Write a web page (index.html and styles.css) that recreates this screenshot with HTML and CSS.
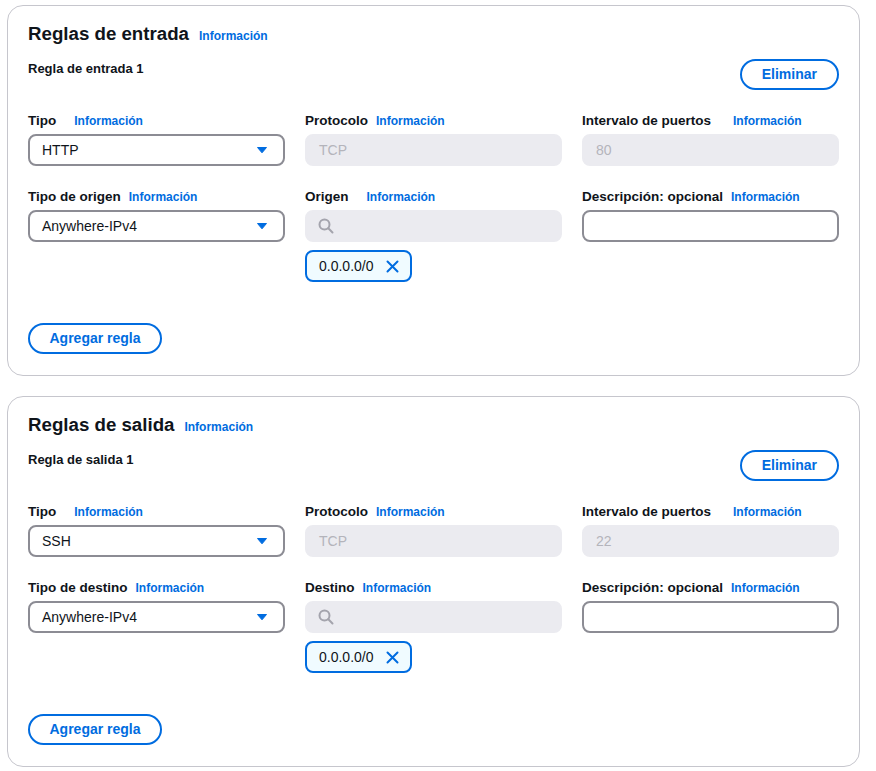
FILE: index.html
```html
<!DOCTYPE html>
<html lang="es">
<head>
<meta charset="utf-8">
<title>Reglas</title>
<link rel="stylesheet" href="styles.css">
</head>
<body>
<div class="page">
  <section class="card">
    <h2 class="card-title"><span class="title-text">Reglas de entrada</span><a class="info">Información</a></h2>
    <div class="rule-head">
      <span class="rule-name">Regla de entrada 1</span>
      <button class="btn">Eliminar</button>
    </div>
    <div class="grid">
      <div class="field">
        <div class="label"><span>Tipo</span><a class="info wide">Información</a></div>
        <div class="control select"><span>HTTP</span><svg class="caret" width="10" height="6" viewBox="0 0 10 6"><path d="M0.5 0.5h9L5 5.8z" fill="#006ce0" stroke="#006ce0" stroke-linejoin="round"/></svg></div>
      </div>
      <div class="field">
        <div class="label"><span>Protocolo</span><a class="info">Información</a></div>
        <div class="control disabled">TCP</div>
      </div>
      <div class="field">
        <div class="label"><span>Intervalo de puertos</span><a class="info xwide">Información</a></div>
        <div class="control disabled">80</div>
      </div>
      <div class="field">
        <div class="label"><span>Tipo de origen</span><a class="info">Información</a></div>
        <div class="control select"><span>Anywhere-IPv4</span><svg class="caret" width="10" height="6" viewBox="0 0 10 6"><path d="M0.5 0.5h9L5 5.8z" fill="#006ce0" stroke="#006ce0" stroke-linejoin="round"/></svg></div>
      </div>
      <div class="field">
        <div class="label"><span>Origen</span><a class="info wide">Información</a></div>
        <div class="control disabled search"><svg width="16" height="16" viewBox="0 0 16 16"><circle cx="6.5" cy="6.5" r="5" fill="none" stroke="#a4a4ad" stroke-width="2"/><path d="M10.3 10.3l4.2 4.2" stroke="#a4a4ad" stroke-width="2" stroke-linecap="round"/></svg></div>
        <div class="token"><span>0.0.0.0/0</span><svg width="13" height="13" viewBox="0 0 13 13"><path d="M1.5 1.5l10 10M11.5 1.5l-10 10" stroke="#006ce0" stroke-width="2" stroke-linecap="round"/></svg></div>
      </div>
      <div class="field">
        <div class="label"><span>Descripción: opcional</span><a class="info">Información</a></div>
        <div class="control text"></div>
      </div>
    </div>
    <button class="btn add">Agregar regla</button>
  </section>

  <section class="card">
    <h2 class="card-title"><span class="title-text">Reglas de salida</span><a class="info">Información</a></h2>
    <div class="rule-head">
      <span class="rule-name">Regla de salida 1</span>
      <button class="btn">Eliminar</button>
    </div>
    <div class="grid">
      <div class="field">
        <div class="label"><span>Tipo</span><a class="info wide">Información</a></div>
        <div class="control select"><span>SSH</span><svg class="caret" width="10" height="6" viewBox="0 0 10 6"><path d="M0.5 0.5h9L5 5.8z" fill="#006ce0" stroke="#006ce0" stroke-linejoin="round"/></svg></div>
      </div>
      <div class="field">
        <div class="label"><span>Protocolo</span><a class="info">Información</a></div>
        <div class="control disabled">TCP</div>
      </div>
      <div class="field">
        <div class="label"><span>Intervalo de puertos</span><a class="info xwide">Información</a></div>
        <div class="control disabled">22</div>
      </div>
      <div class="field">
        <div class="label"><span>Tipo de destino</span><a class="info">Información</a></div>
        <div class="control select"><span>Anywhere-IPv4</span><svg class="caret" width="10" height="6" viewBox="0 0 10 6"><path d="M0.5 0.5h9L5 5.8z" fill="#006ce0" stroke="#006ce0" stroke-linejoin="round"/></svg></div>
      </div>
      <div class="field">
        <div class="label"><span>Destino</span><a class="info">Información</a></div>
        <div class="control disabled search"><svg width="16" height="16" viewBox="0 0 16 16"><circle cx="6.5" cy="6.5" r="5" fill="none" stroke="#a4a4ad" stroke-width="2"/><path d="M10.3 10.3l4.2 4.2" stroke="#a4a4ad" stroke-width="2" stroke-linecap="round"/></svg></div>
        <div class="token"><span>0.0.0.0/0</span><svg width="13" height="13" viewBox="0 0 13 13"><path d="M1.5 1.5l10 10M11.5 1.5l-10 10" stroke="#006ce0" stroke-width="2" stroke-linecap="round"/></svg></div>
      </div>
      <div class="field">
        <div class="label"><span>Descripción: opcional</span><a class="info">Información</a></div>
        <div class="control text"></div>
      </div>
    </div>
    <button class="btn add">Agregar regla</button>
  </section>
</div>
</body>
</html>
```

FILE: styles.css
```css
* { box-sizing: border-box; }
html, body { margin: 0; padding: 0; background: #ffffff; }
body {
  font-family: "Liberation Sans", Arial, sans-serif;
  color: #0f141a;
  font-size: 14px;
}
.page {
  padding: 5px 16px 0 7px;
}
.card {
  width: 853px;
  border: 1px solid #c6c6cd;
  border-radius: 16px;
  padding: 16px 20px 21px 20px;
  margin-bottom: 20px;
  background: #fff;
}
.card-title {
  margin: 0;
  height: 24px;
  display: flex;
  align-items: baseline;
  gap: 10px;
  line-height: 24px;
  font-weight: 700;
}
.card-title .info { line-height: 16px; }
.title-text {
  font-size: 18.7px;
}
.info {
  color: #006ce0;
  font-size: 12px;
  font-weight: 700;
  text-decoration: none;
  cursor: pointer;
}
.rule-head {
  margin-top: 13px;
  display: flex;
  justify-content: space-between;
  align-items: flex-start;
}
.rule-name {
  padding-top: 1px;
  font-size: 13px;
  font-weight: 700;
  line-height: 18px;
}
.btn {
  font-family: "Liberation Sans", Arial, sans-serif;
  font-size: 14px;
  font-weight: 700;
  color: #006ce0;
  background: #fff;
  border: 2px solid #006ce0;
  border-radius: 20px;
  height: 31px;
  padding: 0 20px;
  line-height: 27px;
  cursor: pointer;
}
.btn.add {
  margin-top: 41px;
  padding: 0 19.5px;
}
.grid {
  margin-top: 20px;
  display: grid;
  grid-template-columns: 1fr 1fr 1fr;
  column-gap: 20px;
  row-gap: 20px;
  align-items: start;
}
.label {
  display: flex;
  align-items: baseline;
  height: 21px;
  padding-top: 1px;
  line-height: 20px;
  margin-bottom: 3px;
  font-size: 13.5px;
  font-weight: 700;
}
.label .info { margin-left: 8px; line-height: 16px; }
.label .info.wide { margin-left: 18px; }
.label .info.xwide { margin-left: 22px; }
.control {
  height: 32px;
  border-radius: 8px;
  border: 2px solid #8c8c94;
  padding: 0 12px;
  display: flex;
  align-items: center;
  font-size: 14px;
}
.select {
  justify-content: space-between;
}
.select .caret { margin-right: 4px; }
.disabled {
  background: #ebebf0;
  border-color: #ebebf0;
  color: #b4b4bb;
}
.search svg { margin-left: -1px; }
.text { background: #fff; }
.token {
  margin-top: 8px;
  display: inline-flex;
  align-items: center;
  gap: 12px;
  height: 32px;
  border: 2px solid #006ce0;
  border-radius: 8px;
  background: #f0fbff;
  padding: 0 11px 0 12px;
  font-size: 14px;
}
```
